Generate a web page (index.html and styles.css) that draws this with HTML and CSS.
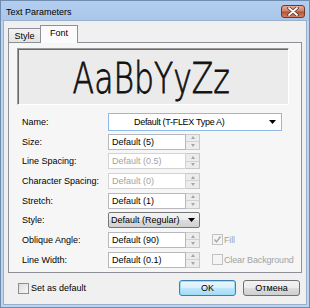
FILE: index.html
```html
<!DOCTYPE html>
<html lang="en">
<head>
  <meta charset="UTF-8" />
  <title>Text Parameters</title>
  <link rel="stylesheet" href="styles.css">
</head>
<body>
  <div class="window">
    <div class="titlebar">
      <span class="title">Text Parameters</span>
      <div class="close">
        <svg width="12" height="9" viewBox="0 0 12 9">
          <path d="M2 1 L10 8 M10 1 L2 8" stroke="#5a3424" stroke-width="3.4" stroke-linecap="round" />
          <path d="M2 1 L10 8 M10 1 L2 8" stroke="#fff" stroke-width="1.8" stroke-linecap="round" />
        </svg>
      </div>
    </div>

    <div class="client">
      <div class="tabs">
        <div class="tab">Style</div>
        <div class="tab active">Font</div>
      </div>

      <div class="panel">
        <div class="preview"><span class="sample">AaBbYyZz</span></div>

        <div class="form">
          <label>Name:</label>
          <div class="name-combo">
            <span>Default (T-FLEX Type A)</span>
            <svg class="arrow" width="7" height="4" viewBox="0 0 7 4"><path d="M0 0 H7 L3.5 4 Z" fill="#000" /></svg>
          </div>

          <label>Size:</label>
          <div class="spin"><span class="spin-text">Default (5)</span><span class="spin-btns"><i class="up"></i><i class="down"></i></span></div>
          <span></span>

          <label>Line Spacing:</label>
          <div class="spin disabled"><span class="spin-text">Default (0.5)</span><span class="spin-btns"><i class="up"></i><i class="down"></i></span></div>
          <span></span>

          <label>Character Spacing:</label>
          <div class="spin disabled"><span class="spin-text">Default (0)</span><span class="spin-btns"><i class="up"></i><i class="down"></i></span></div>
          <span></span>

          <label>Stretch:</label>
          <div class="spin"><span class="spin-text">Default (1)</span><span class="spin-btns"><i class="up"></i><i class="down"></i></span></div>
          <span></span>

          <label>Style:</label>
          <div class="style-combo">
            <span>Default (Regular)</span>
            <svg class="arrow" width="7" height="4" viewBox="0 0 7 4"><path d="M0 0 H7 L3.5 4 Z" fill="#000" /></svg>
          </div>
          <span></span>

          <label>Oblique Angle:</label>
          <div class="spin"><span class="spin-text">Default (90)</span><span class="spin-btns"><i class="up"></i><i class="down"></i></span></div>
          <div class="check disabled">
            <span class="box">
              <svg width="9" height="9" viewBox="0 0 9 9"><path d="M1.5 4.5 L3.5 6.8 L7.5 1.5" stroke="#a8a8a8" stroke-width="1.4" fill="none" /></svg>
            </span>
            <span>Fill</span>
          </div>

          <label>Line Width:</label>
          <div class="spin"><span class="spin-text">Default (0.1)</span><span class="spin-btns"><i class="up"></i><i class="down"></i></span></div>
          <div class="check disabled"><span class="box"></span><span>Clear Background</span></div>
        </div>
      </div>

      <div class="footer">
        <div class="check"><span class="box"></span><span>Set as default</span></div>
        <div class="buttons">
          <button class="btn default">OK</button>
          <button class="btn">Отмена</button>
        </div>
      </div>
    </div>
  </div>
</body>
</html>
```

FILE: styles.css
```css
html, body {
  margin: 0;
  height: 100%;
}
body {
  font-family: "Liberation Sans", Arial, sans-serif;
  font-size: 9px;
  color: #000;
  background: #fff;
}
.window {
  box-sizing: border-box;
  width: 310px;
  height: 308px;
  border: 1px solid #6f8bae;
  background: #bfd5ef;
  padding: 0 3px 3px;
  display: flex;
  flex-direction: column;
}
.titlebar {
  height: 20px;
  flex: none;
  display: flex;
  align-items: center;
  justify-content: space-between;
  background: linear-gradient(#b2cdee, #a9c7eb);
  margin: 0 -3px;
  padding: 0 4px 0 5px;
}
.title {
  font-size: 9px;
  margin-top: 1px;
}
.close {
  box-sizing: border-box;
  width: 24px;
  height: 13px;
  border: 1px solid #6e3b2b;
  border-radius: 3px;
  background: linear-gradient(#e6ab98, #cf8268 45%, #b2553a 55%, #d08064);
  display: flex;
  align-items: center;
  justify-content: center;
}
.client {
  flex: 1;
  background: #f0f0f0;
  box-shadow: 0 0 0 1px #98b0cc;
  padding: 4px 4px 0;
  display: flex;
  flex-direction: column;
}
.tabs {
  display: flex;
  align-items: flex-end;
  height: 17px;
}
.tab {
  box-sizing: border-box;
  width: 33px;
  height: 14px;
  border: 1px solid #8e9097;
  border-bottom: none;
  background: linear-gradient(#f3f3f3, #e4e4e4);
  text-align: center;
  line-height: 14px;
}
.tab.active {
  position: relative;
  z-index: 1;
  width: 38px;
  height: 18px;
  margin-left: -1px;
  margin-bottom: -1px;
  background: #fbfbfc;
  line-height: 15px;
}
.panel {
  box-sizing: border-box;
  height: 231px;
  border: 1px solid #8e9097;
  background: #f6f6f6;
}
.preview {
  box-sizing: border-box;
  height: 57px;
  margin: 5px 12px 0 8px;
  border: 1px solid;
  border-color: #9a9a9a #ffffff #ffffff #9a9a9a;
  box-shadow: inset 1px 1px 0 #6a6a6a;
  background: #ebebeb;
  display: flex;
  align-items: center;
  justify-content: center;
  overflow: hidden;
}
.sample {
  font-family: "DejaVu Sans", sans-serif;
  font-size: 42.5px;
  font-weight: 200;
  -webkit-text-stroke: 0.8px #111;
  color: #111;
  transform: scaleX(0.74);
  margin: 4px 4px 0 0;
  white-space: nowrap;
}
.form {
  display: grid;
  grid-template-columns: 86px 92px 1fr;
  grid-auto-rows: 19.7px;
  align-items: center;
  margin-top: 7px;
  padding-left: 13px;
}
.name-combo {
  grid-column: 2 / 4;
  box-sizing: border-box;
  width: 174px;
  height: 18px;
  border: 1px solid #8fb9e6;
  background: #fff;
  display: flex;
  align-items: center;
  justify-content: space-between;
  padding: 0 5px 0 25px;
  letter-spacing: -0.3px;
}
.spin {
  display: flex;
  height: 16px;
}
.spin-text {
  box-sizing: border-box;
  flex: 1;
  border: 1px solid #b6b8be;
  background: #fff;
  padding-left: 3px;
  line-height: 14px;
}
.spin-btns {
  box-sizing: border-box;
  width: 14px;
  border: 1px solid #c9c9c9;
  border-left: none;
  background: #ececec;
  display: flex;
  flex-direction: column;
}
.spin-btns i {
  flex: 1;
  display: flex;
  align-items: center;
  justify-content: center;
}
.spin-btns i + i {
  border-top: 1px solid #d2d2d2;
}
.spin-btns .up::before,
.spin-btns .down::before {
  content: "";
  border-left: 2.5px solid transparent;
  border-right: 2.5px solid transparent;
}
.spin-btns .up::before {
  border-bottom: 3px solid #a6a6a6;
}
.spin-btns .down::before {
  border-top: 3px solid #a6a6a6;
}
.spin.disabled .spin-text {
  color: #a3a3a3;
  border-color: #d3d3d3;
}
.style-combo {
  box-sizing: border-box;
  height: 16px;
  border: 1px solid #777;
  border-radius: 2px;
  background: linear-gradient(#f4f4f4, #ebebeb 50%, #dcdcdc 51%, #d0d0d0);
  display: flex;
  align-items: center;
  justify-content: space-between;
  padding: 0 4px 0 2px;
}
.check {
  display: flex;
  align-items: center;
  gap: 2px;
}
.form .check {
  padding-left: 12px;
  gap: 1px;
  letter-spacing: -0.15px;
}
.box {
  box-sizing: border-box;
  width: 11px;
  height: 11px;
  border: 1px solid #8f8f8f;
  background: linear-gradient(135deg, #dcdcdc, #f8f8f8);
  display: flex;
  align-items: center;
  justify-content: center;
}
.check.disabled {
  color: #a3a3a3;
}
.check.disabled .box {
  border-color: #c2c2c2;
  background: #f4f4f4;
}
.footer {
  flex: 1;
  display: flex;
  align-items: center;
  justify-content: space-between;
  padding: 0 2px 1px 10px;
}
.buttons {
  display: flex;
  gap: 7px;
}
.btn {
  box-sizing: border-box;
  width: 57px;
  height: 16px;
  padding: 0;
  font-family: "Liberation Sans", Arial, sans-serif;
  font-size: 9px;
  color: #000;
  border: 1px solid #707070;
  border-radius: 3px;
  background: linear-gradient(#f2f2f2, #ebebeb 50%, #dddddd 51%, #cfcfcf);
}
.btn.default {
  border-color: #3c7fb1;
  background: linear-gradient(#eaf6fd, #d9f0fc 50%, #bee6fd 51%, #a7d9f5);
  box-shadow: inset 0 0 0 1px #9fdcf7;
}
```
